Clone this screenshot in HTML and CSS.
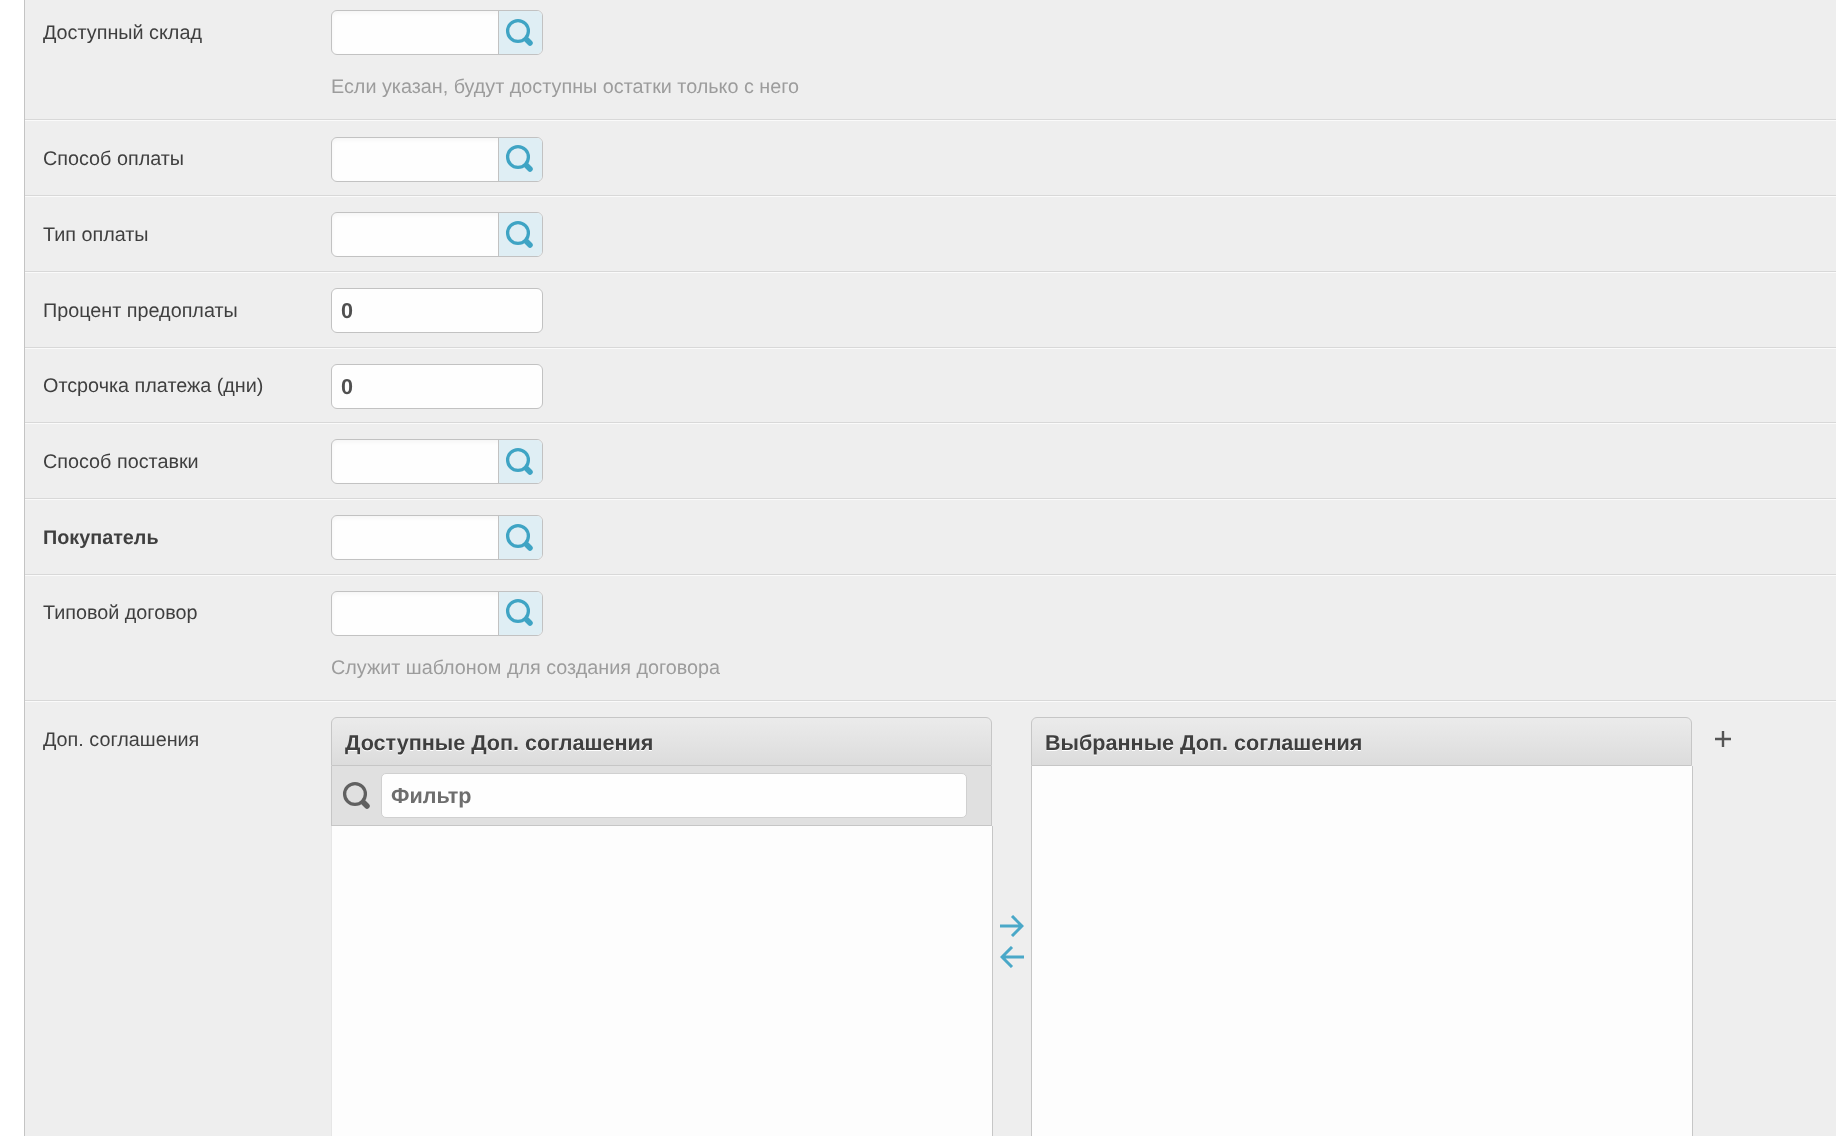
FILE: index.html
```html
<!DOCTYPE html>
<html lang="ru">
<head>
<meta charset="utf-8">
<title>Условия</title>
<link rel="stylesheet" href="styles.css">
</head>
<body>
<svg class="defs" width="0" height="0" aria-hidden="true">
  <symbol id="lens" viewBox="0 0 30 30">
    <circle cx="13" cy="13" r="10.400" fill="none" stroke="currentColor" stroke-width="3.300"/>
    <path d="M21.500 21.500 25 25" fill="none" stroke="currentColor" stroke-width="5.500" stroke-linecap="round"/>
  </symbol>
</svg>
<main class="form">
  <div class="row row-first">
    <label class="label">Доступный склад</label>
    <div class="field">
      <div class="key"><span class="key-value"></span><span class="key-btn"><svg class="lens"><use href="#lens"/></svg></span></div>
      <p class="hint">Если указан, будут доступны остатки только с него</p>
    </div>
  </div>
  <div class="row">
    <label class="label">Способ оплаты</label>
    <div class="field"><div class="key"><span class="key-value"></span><span class="key-btn"><svg class="lens"><use href="#lens"/></svg></span></div></div>
  </div>
  <div class="row">
    <label class="label">Тип оплаты</label>
    <div class="field"><div class="key"><span class="key-value"></span><span class="key-btn"><svg class="lens"><use href="#lens"/></svg></span></div></div>
  </div>
  <div class="row">
    <label class="label">Процент предоплаты</label>
    <div class="field"><div class="num">0</div></div>
  </div>
  <div class="row">
    <label class="label">Отсрочка платежа (дни)</label>
    <div class="field"><div class="num">0</div></div>
  </div>
  <div class="row">
    <label class="label">Способ поставки</label>
    <div class="field"><div class="key"><span class="key-value"></span><span class="key-btn"><svg class="lens"><use href="#lens"/></svg></span></div></div>
  </div>
  <div class="row">
    <label class="label label-strong">Покупатель</label>
    <div class="field"><div class="key"><span class="key-value"></span><span class="key-btn"><svg class="lens"><use href="#lens"/></svg></span></div></div>
  </div>
  <div class="row">
    <label class="label">Типовой договор</label>
    <div class="field">
      <div class="key"><span class="key-value"></span><span class="key-btn"><svg class="lens"><use href="#lens"/></svg></span></div>
      <p class="hint">Служит шаблоном для создания договора</p>
    </div>
  </div>
  <div class="row row-last">
    <label class="label">Доп. соглашения</label>
    <div class="picker">
      <section class="panel">
        <h3 class="panel-title">Доступные Доп. соглашения</h3>
        <div class="filter">
          <svg class="lens-gray"><use href="#lens"/></svg>
          <div class="filter-input">Фильтр</div>
        </div>
        <div class="panel-body panel-body-open"></div>
      </section>
      <div class="moves">
        <svg class="arrow" viewBox="0 0 24 22"><path d="M0 11H22M12 1 22 11 12 21" fill="none" stroke="currentColor" stroke-width="3"/></svg>
        <svg class="arrow" viewBox="0 0 24 22"><path d="M24 11H2M12 1 2 11 12 21" fill="none" stroke="currentColor" stroke-width="3"/></svg>
      </div>
      <section class="panel">
        <h3 class="panel-title">Выбранные Доп. соглашения</h3>
        <div class="panel-body"></div>
      </section>
      <svg class="plus" viewBox="0 0 18 18"><path d="M9 1V17M1 9H17" fill="none" stroke="currentColor" stroke-width="2.400"/></svg>
    </div>
  </div>
</main>
</body>
</html>
```
FILE: styles.css
```css
* { box-sizing: border-box; }
html, body { margin: 0; height: 1136px; overflow: hidden; background: #fff; }
body { font-family: "Liberation Sans", Arial, sans-serif; font-size: 19.8px; color: #444; text-rendering: geometricPrecision; }
.defs { position: absolute; }
.form { margin-left: 24px; height: 1136px; border-left: 1px solid #c4c4c4; background: #eee; overflow: hidden; filter: blur(.4px); }
.row { display: grid; grid-template-columns: 306px 1fr; padding: 15.2px 0 14.5px; border-bottom: 1px solid #fafafa; box-shadow: inset 0 -1px 0 #d8d8d8; }
.row-first { padding: 10px 0 14.6px; }
.row-last { border-bottom: 0; box-shadow: none; }
.label { padding: 10.5px 0 0 18px; line-height: 24px; color: #3f3f3f; }
.label-strong { font-weight: 700; }
.field { min-width: 0; }
.key { display: flex; width: 212px; height: 45px; border: 1px solid #c2c2c2; border-radius: 6px; overflow: hidden; background: #fefefe; box-shadow: inset 0 2px 4px rgba(0,0,0,.04); }
.key-value { flex: 1; }
.key-btn { display: flex; align-items: center; justify-content: center; width: 44px; padding-right: 2px; background: #dfeef4; border-left: 1px solid #c2c2c2; color: #3fa4c4; }
.lens { width: 30px; height: 30px; }
.num { width: 212px; height: 45px; border: 1px solid #c2c2c2; border-radius: 6px; background: #fefefe; font-size: 21.6px; font-weight: 700; line-height: 43px; padding-left: 9px; color: #505050; }
.hint { margin: 20px 0 6.9px; line-height: 24px; color: #9c9c9c; }
.picker { display: flex; align-items: flex-start; }
.panel { width: 661px; flex: none; }
.panel-title { margin: 0; height: 49px; padding-left: 13px; font-size: 21.6px; line-height: 49px; font-weight: 700; color: #3f3f3f; text-shadow: 0 1px 0 #fff; background: linear-gradient(#ebebeb, #dcdcdc); border: 1px solid #c6c6c6; border-radius: 6px 6px 0 0; }
.filter { display: flex; align-items: center; height: 60px; padding-left: 10px; background: #e0e0e0; border: 1px solid #c6c6c6; border-top: 0; }
.lens-gray { width: 30px; height: 30px; color: #606060; flex: none; }
.filter-input { width: 586px; height: 45px; margin-left: 9px; padding-left: 9px; background: #fefefe; border: 1px solid #d0d0d0; border-radius: 5px; font-weight: 700; line-height: 43px; color: #6e6e6e; font-size: 21.6px; }
.panel-body { height: 600px; margin-right: -1px; background: #fdfdfd; border: 1px solid #c6c6c6; border-width: 0 1px; }
.panel-body-open { border-left-color: #e6e6e6; }
.moves { width: 39px; flex: none; display: flex; flex-direction: column; align-items: center; gap: 9px; padding-top: 198px; color: #4aa8c8; }
.arrow { width: 24px; height: 22px; }
.plus { width: 18px; height: 18px; margin: 13px 0 0 22px; color: #555; flex: none; }
```
